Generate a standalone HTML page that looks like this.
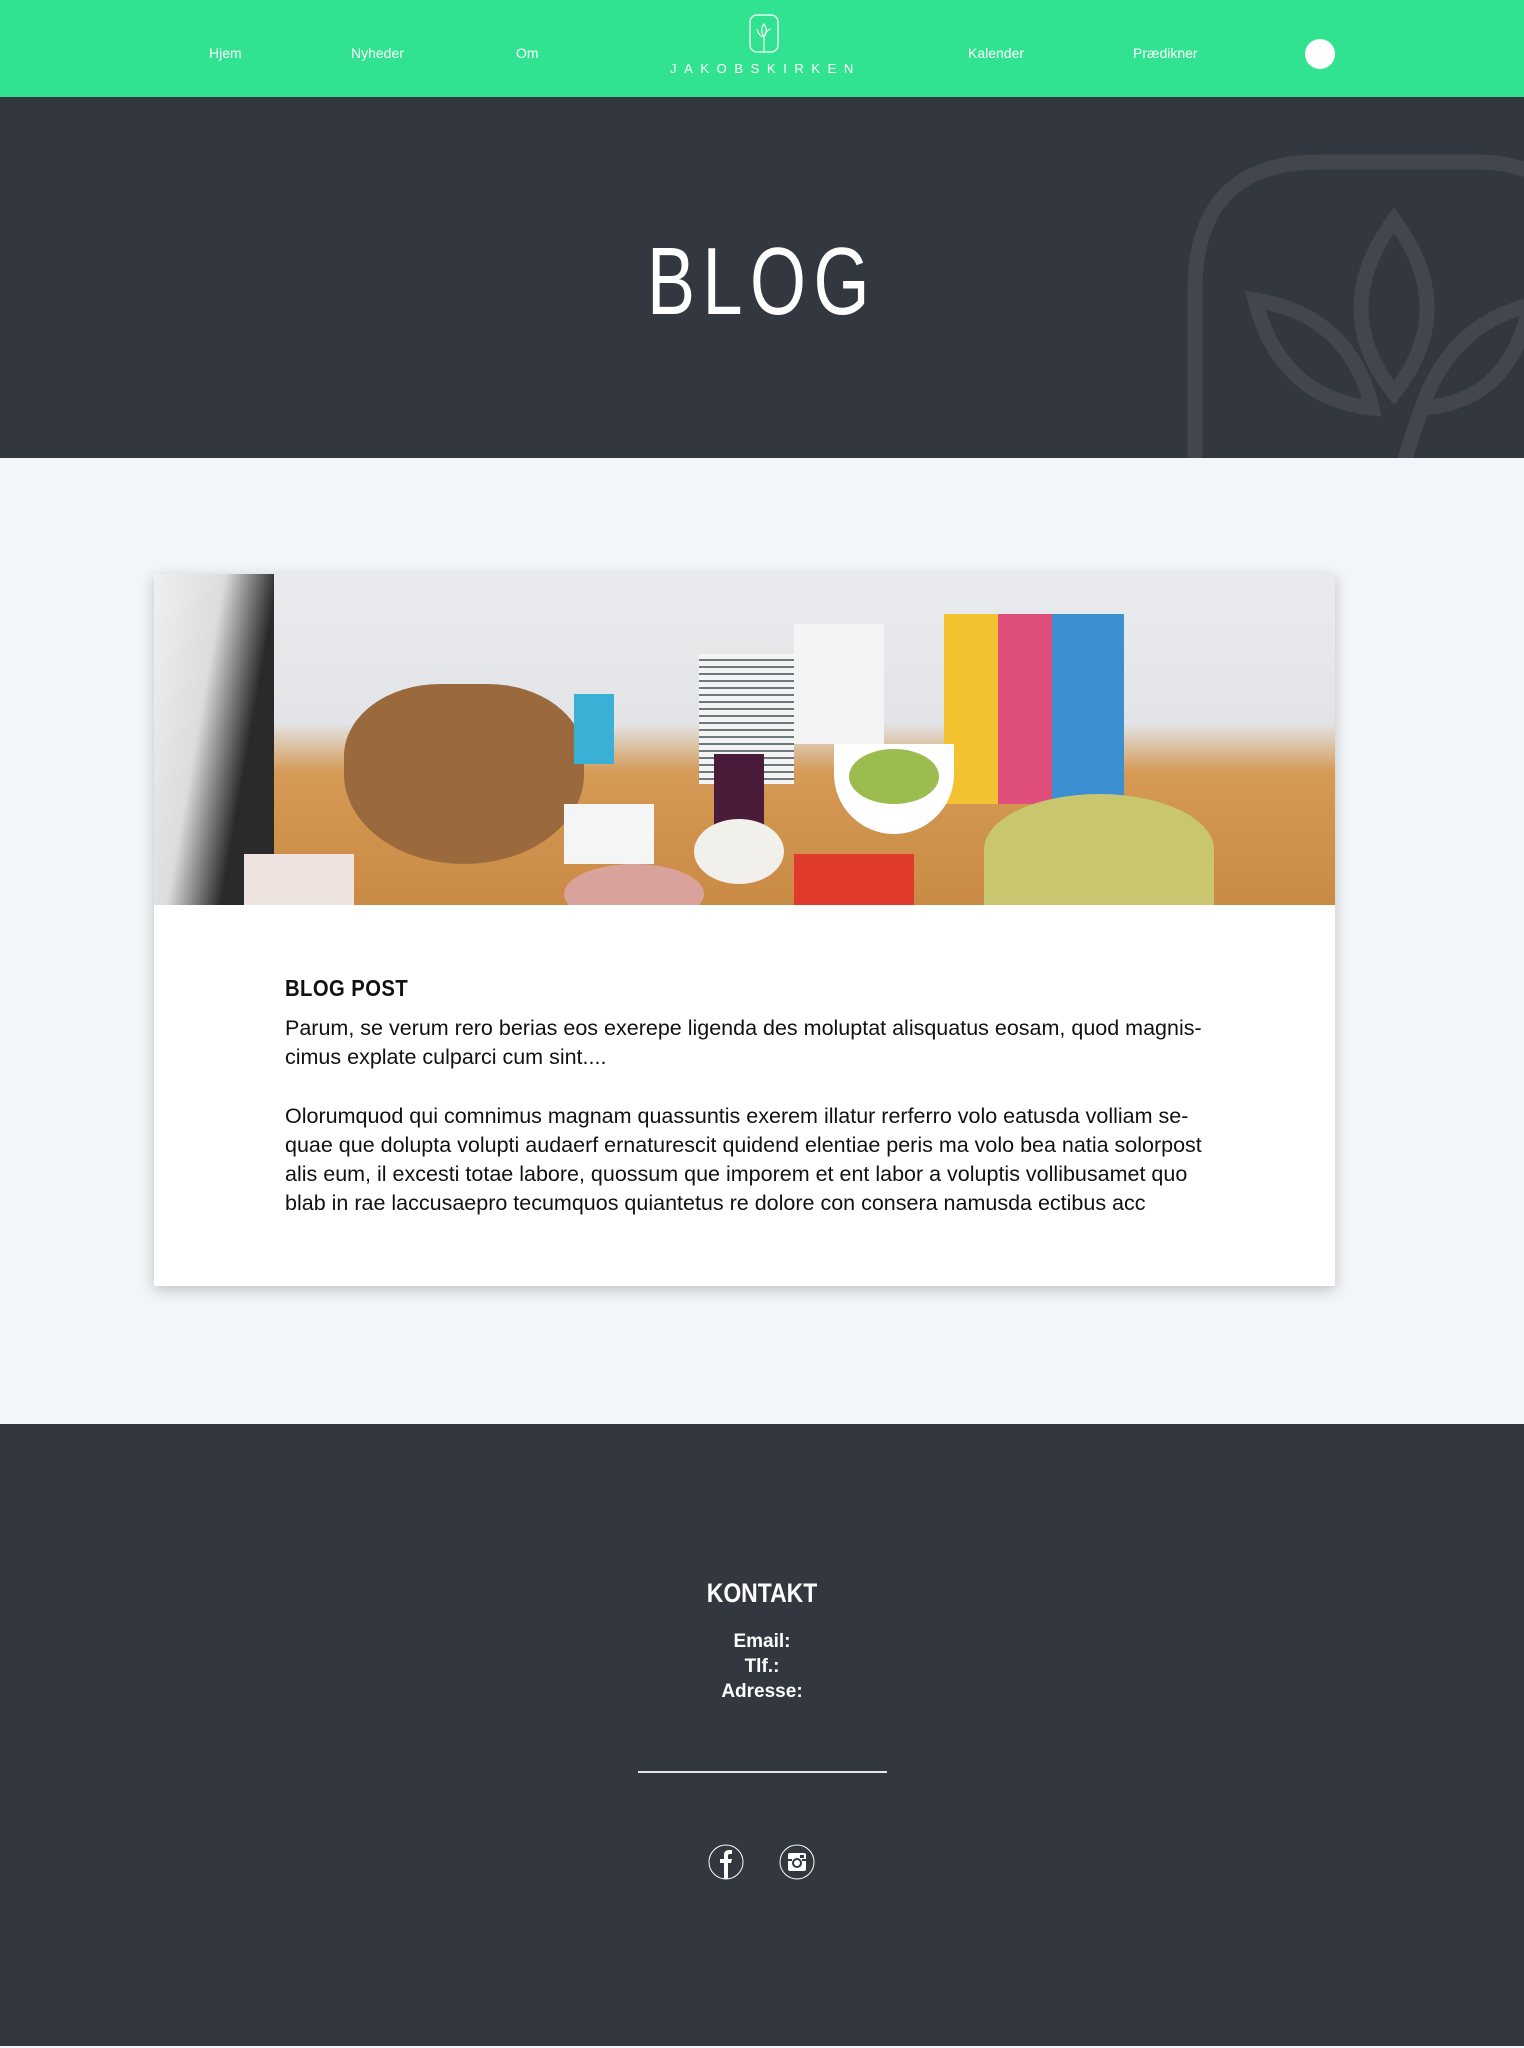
<!DOCTYPE html>
<html><head><meta charset="utf-8"><style>
*{margin:0;padding:0;box-sizing:border-box}
body{width:1524px;height:2048px;background:#f3f6f9;font-family:"Liberation Sans",Arial,sans-serif;position:relative;overflow:hidden}
.nav{position:absolute;left:0;top:0;width:1524px;height:97px;background:#31e391}
.nav a{position:absolute;top:45px;color:#fff;font-size:14px;text-decoration:none}
.hero{position:absolute;left:0;top:97px;width:1524px;height:361px;background:#33373f;overflow:hidden}
.hero h1{position:absolute;left:0;width:1524px;top:137px;text-align:center;color:#fff;font-weight:400;font-size:96px;letter-spacing:10px;line-height:1;font-family:"Liberation Sans",sans-serif;transform:scaleX(0.75)}
.card{position:absolute;left:154px;top:574px;width:1181px;height:712px;background:#fff;box-shadow:0 4px 14px rgba(0,0,0,.22)}
.img{position:absolute;left:0;top:0;width:1181px;height:331px;overflow:hidden;background:linear-gradient(180deg,#e9ebee 0%,#e2e4e7 45%,#d59a55 60%,#c98a45 100%)}
.txt{position:absolute;left:131px;top:400px;color:#111;font-size:21.5px;line-height:29.3px;white-space:nowrap}
.txt h2{font-size:23px;font-weight:700;letter-spacing:.5px;transform:scaleX(.88);transform-origin:left;margin-bottom:12px;line-height:28px}
.foot{position:absolute;left:0;top:1424px;width:1524px;height:622px;background:#33373f;color:#fff;text-align:center}
</style></head><body>
<div class="nav">
<a style="left:209px">Hjem</a>
<a style="left:351px">Nyheder</a>
<a style="left:516px">Om</a>
<a style="left:968px">Kalender</a>
<a style="left:1133px">Prædikner</a>
<svg style="position:absolute;left:749px;top:14px" width="30" height="40" viewBox="0 0 30 40"><rect x="1" y="1" width="28" height="37" rx="7" fill="none" stroke="#fff" stroke-width="1.3"/><path d="M15 10c-3 4-3 9 0 13c3-4 3-9 0-13zM8 15c1 5 4 8 7 8M22 15c-4 1-7 5-7 8v14" fill="none" stroke="#fff" stroke-width="1.1"/></svg>
<div style="position:absolute;left:670px;top:61px;width:186px;color:#fff;font-size:13px;letter-spacing:7.6px;white-space:nowrap">JAKOBSKIRKEN</div>
<div style="position:absolute;left:1305px;top:39px;width:30px;height:30px;border-radius:50%;background:#fff"></div>
</div>
<div class="hero">
<h1>BLOG</h1>
<svg style="position:absolute;left:1150px;top:43px" width="374" height="330" viewBox="0 0 374 330"><g fill="none" stroke="#43464c" stroke-width="15"><path d="M45 330V150Q45 22 170 22H330Q360 22 390 35"/><path d="M244 80Q178 170 244 253Q310 170 244 80Z"/><path d="M105 160Q200 175 222 268Q130 258 105 160Z"/><path d="M380 165Q300 185 272 268Q360 262 380 165Z"/><path d="M272 268Q260 300 252 330"/></g></svg>
</div>
<div class="card">
<div class="img">
<div style="position:absolute;left:0;top:0;width:120px;height:331px;background:linear-gradient(100deg,#f0f0f0 0,#dcdcdc 40%,#2a2a2a 70%)"></div>
<div style="position:absolute;left:190px;top:110px;width:240px;height:180px;border-radius:40% 40% 50% 50%;background:#9a6a3e"></div>
<div style="position:absolute;left:420px;top:120px;width:40px;height:70px;background:#3ab0d6"></div>
<div style="position:absolute;left:545px;top:80px;width:95px;height:130px;background:repeating-linear-gradient(180deg,#f4f4f4 0 5px,#6c7a80 5px 7px)"></div>
<div style="position:absolute;left:640px;top:50px;width:90px;height:120px;background:#f4f4f4"></div>
<div style="position:absolute;left:790px;top:40px;width:180px;height:190px;background:linear-gradient(90deg,#f2c230 0 30%,#e04f7c 30% 60%,#3c8fd0 60%)"></div>
<div style="position:absolute;left:680px;top:170px;width:120px;height:90px;border-radius:0 0 60px 60px;background:#fff"></div>
<div style="position:absolute;left:695px;top:175px;width:90px;height:55px;border-radius:50%;background:#9bbd4f"></div>
<div style="position:absolute;left:560px;top:180px;width:50px;height:90px;background:#4a1c3a"></div>
<div style="position:absolute;left:410px;top:230px;width:90px;height:60px;background:#f5f5f5"></div>
<div style="position:absolute;left:540px;top:245px;width:90px;height:65px;border-radius:50%;background:#f2f0ea"></div>
<div style="position:absolute;left:830px;top:220px;width:230px;height:111px;border-radius:50% 50% 0 0;background:#c8c66e"></div>
<div style="position:absolute;left:410px;top:290px;width:140px;height:60px;border-radius:50%;background:#d9a29a"></div>
<div style="position:absolute;left:640px;top:280px;width:120px;height:60px;background:#e03a2a"></div>
<div style="position:absolute;left:90px;top:280px;width:110px;height:60px;background:#efe3df"></div>
</div>
<div class="txt">
<h2>BLOG POST</h2>
<p>Parum, se verum rero berias eos exerepe ligenda des moluptat alisquatus eosam, quod magnis-<br>cimus explate culparci cum sint....</p>
<p style="margin-top:29px">Olorumquod qui comnimus magnam quassuntis exerem illatur rerferro volo eatusda volliam se-<br>quae que dolupta volupti audaerf ernaturescit quidend elentiae peris ma volo bea natia solorpost<br>alis eum, il excesti totae labore, quossum que imporem et ent labor a voluptis vollibusamet quo<br>blab in rae laccusaepro tecumquos quiantetus re dolore con consera namusda ectibus acc</p>
</div>
</div>
<div class="foot">
<div style="position:absolute;left:0;width:1524px;top:154px;font-size:27px;font-weight:700;transform:scaleX(.85)">KONTAKT</div>
<div style="position:absolute;left:0;width:1524px;top:205px;font-size:19px;font-weight:700;line-height:25px">Email:<br>Tlf.:<br>Adresse:</div>
<div style="position:absolute;left:638px;top:347px;width:249px;height:2px;background:#e6e6e6"></div>
<svg style="position:absolute;left:708px;top:420px" width="36" height="36" viewBox="0 0 36 36"><circle cx="18" cy="18" r="17" fill="none" stroke="#fff" stroke-width="1"/><path d="M16 35V19h-4v-4h4v-4q0-5 5-5h3v4h-2q-2 0-2 2v3h4l-1 4h-3v16z" fill="#fff"/></svg>
<svg style="position:absolute;left:779px;top:420px" width="36" height="36" viewBox="0 0 36 36"><circle cx="18" cy="18" r="17" fill="none" stroke="#fff" stroke-width="1"/><rect x="9" y="9" width="18" height="18" rx="2" fill="#fff"/><circle cx="18" cy="19" r="5" fill="#33373f"/><circle cx="18" cy="19" r="3" fill="#fff"/><rect x="21" y="11" width="4" height="3" fill="#33373f"/><rect x="9" y="15" width="4" height="2" fill="#33373f"/><rect x="23" y="15" width="4" height="2" fill="#33373f"/></svg>
</div>
</body></html>
